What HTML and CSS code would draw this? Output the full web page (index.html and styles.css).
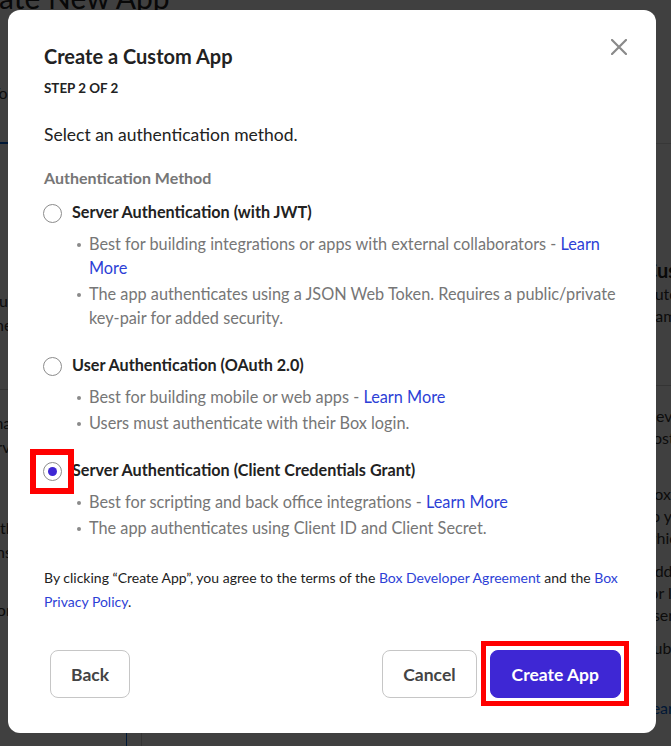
FILE: index.html
```html
<!DOCTYPE html>
<html lang="en">
<head>
<meta charset="utf-8">
<title>Create a Custom App</title>
<link rel="stylesheet" href="styles.css">
</head>
<body>
<div class="page">
  <h1 class="bg-title">Create New App</h1>
  <p class="bg-sub">To get started, choose the type of app you would like to build.</p>
  <div class="bg-tabs"><span class="bg-tab-active"></span></div>
  <div class="bg-cols">
    <div class="bg-left">
      <p class="bg-p">Build a custom application for your enterprise using a range of authentication methods and Box APIs for content</p>
      <hr class="bg-hr">
      <p class="bg-p gap-a">Use this option to build an app that can authenticate users or run as a service account for the enterprise</p>
      <p class="bg-p gap-b">Limited access apps work well with the browser and let you perform simple actions with a token shared by the users of this app</p>
      <p class="bg-p gap-c">Choose an app type, then a corporate method of authentication</p>
      <p class="bg-p gap-d"><a class="bg-link">Learn about app types here</a></p>
    </div>
    <div class="bg-gap"></div>
    <div class="bg-mid"></div>
    <div class="bg-right">
      <h3 class="bg-h">Custom Skill n</h3>
      <p class="bg-p">Automate content processing using the skill</p>
      <p class="bg-p">framework to get started with tools</p>
      <hr class="bg-hr r">
      <p class="bg-p r2">Development environment and a</p>
      <p class="bg-p">hosted endpoint are needed</p>
      <p class="bg-p r3">Box passes files to your service</p>
      <p class="bg-p">so you can easily add metadata</p>
      <p class="bg-p">which is then saved in Box</p>
      <p class="bg-p r4">Add metadata and cards to files</p>
      <p class="bg-p">for later search and retrieval by</p>
      <p class="bg-p">users across your enterprise</p>
      <p class="bg-p r4">Publish and distribute the skill</p>
      <p class="bg-p r5"><a class="bg-link">Learn more about skills</a></p>
    </div>
  </div>
</div>

<div class="overlay">
  <div class="modal" role="dialog" aria-labelledby="modal-title">
    <button class="close" aria-label="Close">
      <svg width="16" height="16" viewBox="0 0 16 16"><path d="M1 1L15 15M15 1L1 15" stroke="#8a8a8a" stroke-width="2.2" stroke-linecap="square" fill="none"/></svg>
    </button>
    <h2 class="title" id="modal-title">Create a Custom App</h2>
    <div class="step">STEP 2 OF 2</div>
    <p class="lead">Select an authentication method.</p>
    <div class="group-label">Authentication Method</div>

    <div class="option first">
      <div class="option-row"><span class="radio"></span><span class="option-label">Server Authentication (with JWT)</span></div>
      <ul class="bullets">
        <li><span class="dot"></span><span>Best for building integrations or apps with external collaborators - <a class="link">Learn More</a></span></li>
        <li><span class="dot"></span><span>The app authenticates using a JSON Web Token. Requires a public/private <span class="nobr">key-pair</span> for added security.</span></li>
      </ul>
    </div>

    <div class="option">
      <div class="option-row"><span class="radio"></span><span class="option-label">User Authentication (OAuth 2.0)</span></div>
      <ul class="bullets">
        <li><span class="dot"></span><span>Best for building mobile or web apps - <a class="link">Learn More</a></span></li>
        <li><span class="dot"></span><span>Users must authenticate with their Box login.</span></li>
      </ul>
    </div>

    <div class="option">
      <div class="option-row"><span class="radio checked"><span class="mark mark-radio"></span></span><span class="option-label">Server Authentication (Client Credentials Grant)</span></div>
      <ul class="bullets">
        <li><span class="dot"></span><span>Best for scripting and back office integrations - <a class="link">Learn More</a></span></li>
        <li><span class="dot"></span><span>The app authenticates using Client ID and Client Secret.</span></li>
      </ul>
    </div>

    <p class="terms">By clicking “Create App”, you agree to the terms of the <a class="link">Box Developer Agreement</a> and the <a class="link">Box Privacy Policy</a>.</p>

    <div class="footer">
      <button class="btn">Back</button>
      <span class="spacer"></span>
      <button class="btn">Cancel</button>
      <button class="btn btn-primary">Create App<span class="mark mark-btn"></span></button>
    </div>
  </div>
</div>
</body>
</html>
```

FILE: styles.css
```css
* { box-sizing: border-box; }

html, body {
  margin: 0;
  padding: 0;
  height: 746px;
  overflow: hidden;
  background: #ffffff;
  font-family: Lato, "Open Sans", "Liberation Sans", sans-serif;
  color: #222222;
}

/* ---------- background page ---------- */
.page { width: 671px; }

.bg-title {
  margin: -21px 0 0 -47px;
  font-size: 30px;
  line-height: 36px;
  font-weight: 400;
  white-space: nowrap;
  color: #222;
}

.bg-sub {
  margin: 66px 0 0 -9px;
  font-size: 16px;
  line-height: 24px;
  white-space: nowrap;
  color: #333;
}

.bg-tabs {
  height: 39px;
  border-bottom: 1px solid #dcdcdc;
  display: flex;
  align-items: flex-end;
}

.bg-tab-active {
  display: block;
  width: 60px;
  margin-left: -52px;
  margin-bottom: -1px;
  border-bottom: 2px solid #0061d5;
}

.bg-cols {
  display: flex;
  height: 620px;
}

.bg-left {
  flex: none;
  width: 357px;
  margin-left: -230px;
  padding-top: 145px;
  border-right: 1px solid #0061d5;
}

.bg-gap {
  flex: none;
  width: 15px;
  border-right: 1px solid #cfcfcf;
}

.bg-mid {
  flex: none;
  width: 502px;
}

.bg-right {
  flex: none;
  width: 300px;
  padding-top: 113px;
}

.bg-p {
  margin: 0;
  font-size: 16px;
  line-height: 24px;
  color: #333;
}

.bg-right .bg-p { line-height: 22px; white-space: nowrap; }

.bg-h {
  margin: 0;
  font-size: 20px;
  line-height: 26px;
  font-weight: 700;
  white-space: nowrap;
  color: #222;
}

.bg-hr {
  margin: 28px 0 0;
  border: 0;
  border-top: 1px solid #d0d0d0;
}
.bg-hr.r { margin-top: 58px; }

.gap-a { margin-top: 21px; }
.gap-b { margin-top: 33px; }
.gap-c { margin-top: 10px; }
.gap-d { margin-top: 13px; }
.r2 { margin-top: 19px; }
.r3 { margin-top: 34px; }
.r4 { margin-top: 11px; }
.r5 { margin-top: 38px; }

.bg-link { color: #0061d5; }

/* ---------- overlay + modal ---------- */
.overlay {
  position: fixed;
  inset: 0;
  background: rgba(0, 0, 0, 0.75);
  display: flex;
  align-items: flex-start;
  padding: 10px 15px 14px 8px;
}

.modal {
  position: relative;
  width: 648px;
  background: #ffffff;
  border-radius: 12px;
  padding: 34px 33px 35px 36px;
}

.close {
  position: absolute;
  top: 29px;
  right: 29px;
  width: 16px;
  height: 16px;
  padding: 0;
  border: 0;
  background: none;
  display: block;
}
.close svg { display: block; }

.title {
  margin: 0;
  font-size: 20px;
  line-height: 24px;
  font-weight: 700;
  color: #222;
}

.step {
  margin-top: 12px;
  font-size: 13.4px;
  line-height: 16px;
  font-weight: 700;
  color: #222;
}

.lead {
  margin: 27px 0 0;
  font-size: 17.5px;
  line-height: 24px;
  color: #222;
}

.group-label {
  margin-top: 21px;
  font-size: 16px;
  line-height: 20px;
  font-weight: 700;
  color: #767676;
}

.option { margin-top: 23px; }
.option.first { margin-top: 12px; }

.option-row {
  display: flex;
  align-items: flex-start;
}

.radio {
  position: relative;
  flex: none;
  width: 19px;
  height: 19px;
  margin: 4px 10px 0 -1px;
  border: 1px solid #8c8c8c;
  border-radius: 50%;
  background: #fff;
  display: grid;
  place-items: center;
}

.radio.checked::after {
  content: "";
  width: 9px;
  height: 9px;
  border-radius: 50%;
  background: #3e27d4;
}

.option-label {
  font-size: 16.2px;
  line-height: 24px;
  font-weight: 700;
  color: #222;
}

.bullets {
  list-style: none;
  margin: 8px 0 0;
  padding: 0 0 0 33px;
}

.bullets li {
  display: flex;
  align-items: flex-start;
  font-size: 16.3px;
  line-height: 24px;
  color: #767676;
}

.bullets li + li { margin-top: 2px; }

.nobr { white-space: nowrap; }

.dot {
  flex: none;
  width: 4px;
  height: 4px;
  margin: 11px 8px 0 0;
  border-radius: 50%;
  background: #8a8a8a;
}

.link {
  color: #2d3fd6;
  text-decoration: none;
}

.terms {
  margin: 26px 0 0;
  font-size: 14px;
  line-height: 24px;
  color: #222;
}

.footer {
  margin-top: 36px;
  display: flex;
  align-items: center;
  gap: 13px;
  padding: 0 2px 0 6px;
}

.spacer { flex: 1; }

.btn {
  position: relative;
  height: 48px;
  padding: 0 20px;
  border: 1px solid #c6c6c6;
  border-radius: 8px;
  background: #fff;
  font-family: Lato, "Open Sans", "Liberation Sans", sans-serif;
  font-size: 17.5px;
  font-weight: 700;
  color: #444;
}

.btn-primary {
  border-color: #3e27d4;
  background: #3e27d4;
  color: #fff;
  padding: 0 21px;
}

/* red annotation boxes */
.mark {
  position: absolute;
  border: 6px solid #ff0000;
  pointer-events: none;
}
.mark-radio { inset: -14px -13px -14px -14px; }
.mark-btn { inset: -10px -9px -9px -10px; border-width: 5px; }
```
